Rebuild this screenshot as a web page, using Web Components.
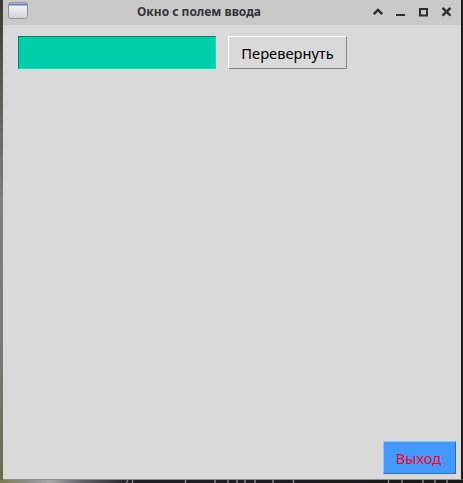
<!DOCTYPE html>
<html>
<head>
<meta charset="utf-8">
<style>
  html, body { margin: 0; padding: 0; }
  body {
    width: 463px; height: 483px; overflow: hidden; display: flex; flex-direction: column;
    background: linear-gradient(180deg, #3a3732 0, #5c5a52 80px, #807d7a 200px, #7a7872 360px, #6c6c50 470px);
    font-family: "Noto Sans", sans-serif;
  }
</style>
</head>
<body>
<app-window heading="Окно с полем ввода">
  <text-field></text-field>
  <push-button>Перевернуть</push-button>
  <exit-button slot="footer">Выход</exit-button>
</app-window>
<desk-strip></desk-strip>

<script>
// window frame with title bar
const windowTemplate = document.createElement('template');
windowTemplate.innerHTML = `
  <style>
    :host { display: flex; flex-direction: column; flex: none; width: 460px; height: 480px; margin-left: 3px; background: #d9d9d9;
      box-sizing: border-box; border-bottom: 1px solid #8e8e8e; border-right: 2px solid #1c1c1c; }
    .title { display: flex; align-items: flex-start; height: 25px; flex: none; background: #c9c9c9; }
    .icon { flex: none; width: 20px; height: 17px; margin: 2px 0 0 5px; }
    h1 { flex: 1; margin: 0; line-height: 24px; text-align: center; font-family: "Noto Sans", sans-serif; font-size: 12px; font-weight: bold; color: #33333a; }
    .buttons { display: flex; flex: none; gap: 7px; padding: 4px 6px 0 0; }
    .buttons svg { width: 16px; height: 16px; display: block; }
    .body { flex: 1; display: flex; flex-direction: column; }
    .row { display: flex; align-items: flex-start; gap: 12px; padding: 11px 0 0 15px; flex: 1; }
    .foot { display: flex; justify-content: flex-end; padding: 0 5px 5px 0; }
  </style>
  <div class="title">
    <svg class="icon" viewBox="0 0 20 17">
      <defs><linearGradient id="g" x1="0" y1="0" x2="0" y2="1"><stop offset="0" stop-color="#fbfbfb"/><stop offset="1" stop-color="#cfd2d4"/></linearGradient></defs>
      <rect x="0.5" y="0.5" width="19" height="16" rx="2" fill="url(#g)" stroke="#8f9196"/>
      <rect x="1" y="1.5" width="18" height="2" fill="#5a7cb4"/>
    </svg>
    <h1 id="heading"></h1>
    <div class="buttons">
      <svg viewBox="0 0 16 16"><path d="M3.8 10.2 8 6l4.2 4.2" fill="none" stroke="#2e2e2e" stroke-width="2.4"/></svg>
      <svg viewBox="0 0 16 16"><rect x="3" y="10" width="9" height="2" fill="#2e2e2e"/></svg>
      <svg viewBox="0 0 16 16"><rect x="4" y="5" width="7" height="6.5" fill="none" stroke="#2e2e2e" stroke-width="2"/></svg>
      <svg viewBox="0 0 16 16"><path d="M3.5 3.8 11.5 11.7M11.5 3.8 3.5 11.7" fill="none" stroke="#2e2e2e" stroke-width="2.4"/></svg>
    </div>
  </div>
  <div class="body">
    <div class="row"><slot></slot></div>
    <div class="foot"><slot name="footer"></slot></div>
  </div>
`;

class AppWindow extends HTMLElement {
  constructor() {
    super();
    const shadowRoot = this.attachShadow({ mode: 'open' });
    shadowRoot.appendChild(windowTemplate.content.cloneNode(true));
    shadowRoot.getElementById('heading').textContent = this.getAttribute('heading');
  }
}

// teal entry box
class TextField extends HTMLElement {
  constructor() {
    super();
    this.attachShadow({ mode: 'open' }).innerHTML = `
      <style>
        :host { display: block; flex: none; width: 198px; height: 33px; box-sizing: border-box; background: #00cfa9;
          border-style: solid; border-width: 1px; border-color: #0a7a68 #00e6bc #00e6bc #0a7a68; }
      </style>`;
  }
}

// raised grey button
class PushButton extends HTMLElement {
  constructor() {
    super();
    this.attachShadow({ mode: 'open' }).innerHTML = `
      <style>
        :host { display: flex; flex: none; align-items: center; justify-content: center; width: 119px; height: 33px; box-sizing: border-box;
          background: #d9d9d9; border-style: solid; border-width: 1px; border-color: #fff #858585 #858585 #fff;
          font: 14.67px "Noto Sans", sans-serif; color: #000; }
      </style><slot></slot>`;
  }
}

// blue exit button
class ExitButton extends HTMLElement {
  constructor() {
    super();
    this.attachShadow({ mode: 'open' }).innerHTML = `
      <style>
        :host { display: flex; flex: none; align-items: center; justify-content: center; width: 73px; height: 33px; box-sizing: border-box;
          padding-right: 2px; background: #4499ff; border-style: solid; border-width: 1px; border-color: #8cc4ff #2a6cb8 #2a6cb8 #8cc4ff;
          font: 14.67px "Noto Sans", sans-serif; color: #ff0018; }
      </style><slot></slot>`;
  }
}

// bit of the desktop that shows under the window
class DeskStrip extends HTMLElement {
  constructor() {
    super();
    this.attachShadow({ mode: 'open' }).innerHTML = `
      <style>
        :host { display: block; flex: 1; background: linear-gradient(90deg, #7c7c4e 0, #8c8c84 25px, #a8a8a8 50px, #5c5c60 85px, #3c3c44 110px, #1e2022 130px, #181818 463px); }
        svg { display: block; width: 463px; height: 3px; }
      </style>
      <svg viewBox="0 0 463 3">
        <path d="M126 3 128 0M132 3 133 0M185 3 186 0M215 0V3M228 0V3M237 0V3M245 0V3M255 0V3M273 0V3M293 0 294 3M388 3 389 0M402 0V3M423 0V3M435 0V3M447 0V3" stroke="#b8b8b8" stroke-width="1" fill="none"/>
      </svg>`;
  }
}

customElements.define('app-window', AppWindow);
customElements.define('text-field', TextField);
customElements.define('push-button', PushButton);
customElements.define('exit-button', ExitButton);
customElements.define('desk-strip', DeskStrip);
</script>
</body>
</html>
